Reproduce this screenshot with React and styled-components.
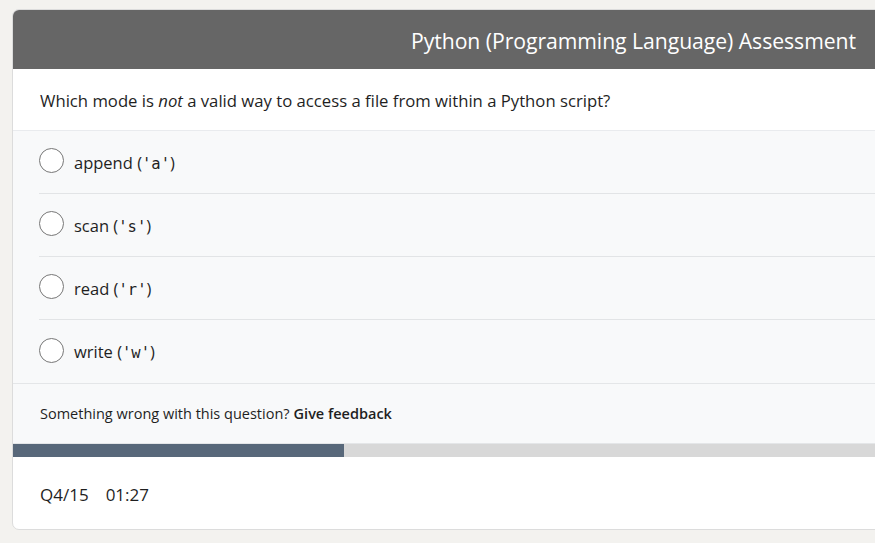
import React from "react";
import styled, { createGlobalStyle } from "styled-components";

const Global = createGlobalStyle`
  html, body { margin: 0; padding: 0; overflow: hidden; }
  body {
    background: #f3f2ef;
    font-family: "Open Sans", "Noto Sans", sans-serif;
    color: #1f1f1f;
  }
`;

const Page = styled.div`
  padding: 9px 0 0 12px;
  width: 900px;
`;

const Card = styled.div`
  width: 880px;
  background: #fff;
  border: 1px solid #dcdcdc;
  border-radius: 7px;
  overflow: hidden;
`;

const Header = styled.div`
  height: 59px;
  background: #666666;
  display: flex;
  align-items: center;
  justify-content: flex-end;
  padding: 2px 37px 0 0;
  box-sizing: border-box;
`;

const Title = styled.h1`
  margin: 0;
  font-size: 21.2px;
  font-weight: 400;
  color: #fff;
  letter-spacing: -0.05px;
`;

const Question = styled.div`
  height: 62px;
  display: flex;
  align-items: center;
  padding: 1px 0 0 27px;
  box-sizing: border-box;
  font-size: 16.7px;
  color: #1f1f1f;
  border-bottom: 1px solid #e9ebee;
`;

const Options = styled.div`
  background: #f8f9fa;
  padding-left: 26px;
  border-bottom: 1px solid #e4e6e8;
`;

const Option = styled.label`
  height: 63px;
  display: flex;
  align-items: center;
  gap: 10px;
  font-size: 16.5px;
  color: #1f1f1f;
  border-bottom: ${(p) => (p.$last ? "none" : "1px solid #e2e4e6")};
  box-sizing: border-box;
`;

const Radio = styled.span`
  width: 23px;
  height: 23px;
  border: 1.5px solid #777;
  border-radius: 50%;
  background: #fff;
  flex-shrink: 0;
  margin-top: -3px;
`;

const Code = styled.code`
  font-family: "DejaVu Sans Mono", "Liberation Mono", monospace;
  font-size: 15.5px;
  color: #1f1f1f;
`;

const Feedback = styled.div`
  height: 59px;
  background: #f8f9fa;
  display: flex;
  align-items: center;
  padding-left: 27px;
  font-size: 14.5px;
  color: #1f1f1f;
  border-bottom: 1px solid #e4e6e8;
`;

const FeedbackLink = styled.b`
  font-weight: 600;
  margin-left: 4px;
`;

const Track = styled.div`
  height: 13px;
  background: #d8d8d8;
`;

const Fill = styled.div`
  height: 100%;
  background: #58687a;
`;

const Footer = styled.div`
  height: 72px;
  display: flex;
  align-items: center;
  gap: 17px;
  padding: 2px 0 0 27px;
  box-sizing: border-box;
  font-size: 17px;
  color: #1f1f1f;
`;

const options = [
  ["append", "a"],
  ["scan", "s"],
  ["read", "r"],
  ["write", "w"],
];

export default function App() {
  return (
    <>
      <Global />
      <Page>
        <Card>
          <Header>
            <Title>Python (Programming Language) Assessment</Title>
          </Header>
          <Question>
            <span>
              Which mode is <em>not</em> a valid way to access a file from within a Python script?
            </span>
          </Question>
          <Options>
            {options.map(([word, ch], i) => (
              <Option key={ch} $last={i === options.length - 1}>
                <Radio />
                <span>
                  {word} (<Code>'{ch}'</Code>)
                </span>
              </Option>
            ))}
          </Options>
          <Feedback>
            Something wrong with this question?
            <FeedbackLink>Give feedback</FeedbackLink>
          </Feedback>
          <Track>
            <Fill style={{ width: `${(331 / 880) * 100}%` }} />
          </Track>
          <Footer>
            <span>Q4/15</span>
            <span>01:27</span>
          </Footer>
        </Card>
      </Page>
    </>
  );
}
